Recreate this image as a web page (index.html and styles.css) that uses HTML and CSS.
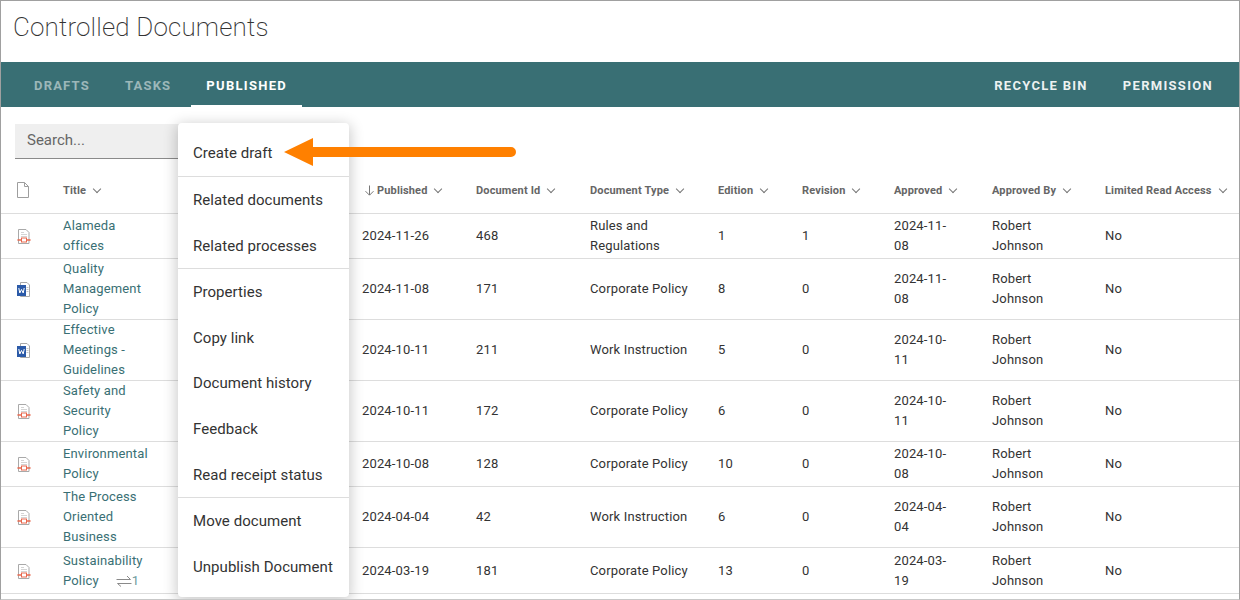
FILE: index.html
```html
<!DOCTYPE html>
<html lang="en">
<head>
  <meta charset="UTF-8">
  <title>Controlled Documents</title>
  <link rel="stylesheet" href="styles.css">
</head>
<body>
  <svg class="defs" width="0" height="0">
    <symbol id="pdf" viewBox="0 0 16 16">
      <path d="M2.500 1.500h7.500L13 4.500V15.500H2.500z" fill="#fff" stroke="#a9a9a9"/>
      <path d="M5 4.500h3M5 6.500h6M5 8.500h6" stroke="#d4d4d4"/>
      <rect x="5.500" y="10" width="5" height="4" fill="#fff" stroke="#e8684e"/>
      <path d="M2 12h3M11 12h3" stroke="#e8684e" stroke-width="1.600" stroke-linecap="round"/>
    </symbol>
    <symbol id="word" viewBox="0 0 16 16">
      <path d="M4.500 1.500h6.500L13.500 4V15.500H4.500z" fill="#fff" stroke="#a9a9a9"/>
      <path d="M10.500 6.500h2M10.500 8.500h2M10.500 10.500h2" stroke="#c6c6c6"/>
      <rect x="1" y="4" width="9" height="11" fill="#2b5aa8"/>
      <path d="M2.800 7l1 5 1.700-3.600L7.200 12l1-5" fill="none" stroke="#fff"/>
    </symbol>
  </svg>

  <div class="frame">
    <h1 class="page-title">Controlled Documents</h1>

    <nav class="tabbar">
      <div class="tabs">
        <a class="tab">Drafts</a>
        <a class="tab">Tasks</a>
        <a class="tab active">Published</a>
      </div>
      <div class="tabs">
        <a class="tab on">Recycle Bin</a>
        <a class="tab on">Permission</a>
      </div>
    </nav>

    <div class="search-row">
      <div class="search">Search...</div>
    </div>

    <table class="docs">
      <colgroup>
        <col class="c-icon"><col class="c-title"><col class="c-pub"><col class="c-id"><col class="c-type">
        <col class="c-ed"><col class="c-rev"><col class="c-appr"><col class="c-by"><col class="c-lim">
      </colgroup>
      <thead>
        <tr>
          <th class="icon-cell">
            <svg class="blank" width="14" height="16" viewBox="0 0 14 16"><path d="M1.500.5h7l4 4v11h-11z M8.500.5v4h4" fill="#fff" stroke="#9e9e9e"/></svg>
          </th>
          <th>Title <i class="chev"></i></th>
          <th><svg class="down" width="9" height="11" viewBox="0 0 9 11"><path d="M4.500.5v9.500M.5 6.200l4 4 4-4" fill="none" stroke="#777"/></svg>Published <i class="chev"></i></th>
          <th>Document Id <i class="chev"></i></th>
          <th>Document Type <i class="chev"></i></th>
          <th>Edition <i class="chev"></i></th>
          <th>Revision <i class="chev"></i></th>
          <th>Approved <i class="chev"></i></th>
          <th>Approved By <i class="chev"></i></th>
          <th>Limited Read Access <i class="chev"></i></th>
        </tr>
      </thead>
      <tbody>
        <tr>
          <td class="icon-cell"><svg class="ficon"><use href="#pdf"/></svg></td>
          <td><a class="doc-link">Alameda offices</a></td>
          <td>2024-11-26</td><td>468</td><td><div class="wrap-type">Rules and Regulations</div></td><td>1</td><td>1</td>
          <td><div class="wrap-date">2024-11-08</div></td><td><div class="wrap-name">Robert Johnson</div></td><td>No</td>
        </tr>
        <tr>
          <td class="icon-cell"><svg class="ficon"><use href="#word"/></svg></td>
          <td><a class="doc-link">Quality Management Policy</a></td>
          <td>2024-11-08</td><td>171</td><td>Corporate Policy</td><td>8</td><td>0</td>
          <td><div class="wrap-date">2024-11-08</div></td><td><div class="wrap-name">Robert Johnson</div></td><td>No</td>
        </tr>
        <tr>
          <td class="icon-cell"><svg class="ficon"><use href="#word"/></svg></td>
          <td><a class="doc-link">Effective Meetings - Guidelines</a></td>
          <td>2024-10-11</td><td>211</td><td>Work Instruction</td><td>5</td><td>0</td>
          <td><div class="wrap-date">2024-10-11</div></td><td><div class="wrap-name">Robert Johnson</div></td><td>No</td>
        </tr>
        <tr>
          <td class="icon-cell"><svg class="ficon"><use href="#pdf"/></svg></td>
          <td><a class="doc-link">Safety and Security Policy</a></td>
          <td>2024-10-11</td><td>172</td><td>Corporate Policy</td><td>6</td><td>0</td>
          <td><div class="wrap-date">2024-10-11</div></td><td><div class="wrap-name">Robert Johnson</div></td><td>No</td>
        </tr>
        <tr>
          <td class="icon-cell"><svg class="ficon"><use href="#pdf"/></svg></td>
          <td><a class="doc-link">Environmental Policy</a></td>
          <td>2024-10-08</td><td>128</td><td>Corporate Policy</td><td>10</td><td>0</td>
          <td><div class="wrap-date">2024-10-08</div></td><td><div class="wrap-name">Robert Johnson</div></td><td>No</td>
        </tr>
        <tr>
          <td class="icon-cell"><svg class="ficon"><use href="#pdf"/></svg></td>
          <td><a class="doc-link">The Process Oriented Business</a></td>
          <td>2024-04-04</td><td>42</td><td>Work Instruction</td><td>6</td><td>0</td>
          <td><div class="wrap-date">2024-04-04</div></td><td><div class="wrap-name">Robert Johnson</div></td><td>No</td>
        </tr>
        <tr class="tall">
          <td class="icon-cell"><svg class="ficon"><use href="#pdf"/></svg></td>
          <td><a class="doc-link"><span class="line">Sustainability</span><span class="line">Policy<span class="links"><svg width="16" height="12" viewBox="0 0 16 12"><path d="M.5 4.500h14L11 1M15.500 8.500H1.500L5 11.500" fill="none" stroke="#8a8a8a"/></svg>1</span></span></a></td>
          <td>2024-03-19</td><td>181</td><td>Corporate Policy</td><td>13</td><td>0</td>
          <td><div class="wrap-date">2024-03-19</div></td><td><div class="wrap-name">Robert Johnson</div></td><td>No</td>
        </tr>
      </tbody>
    </table>

    <ul class="menu">
      <li>Create draft</li>
      <li class="sep"></li>
      <li>Related documents</li>
      <li>Related processes</li>
      <li class="sep"></li>
      <li>Properties</li>
      <li>Copy link</li>
      <li>Document history</li>
      <li>Feedback</li>
      <li>Read receipt status</li>
      <li class="sep"></li>
      <li>Move document</li>
      <li>Unpublish Document</li>
    </ul>

    <svg class="arrow" width="235" height="30" viewBox="0 0 235 30">
      <path d="M1 15 30 1V10H228a5 5 0 0 1 0 10H30V29z" fill="#ff8000"/>
    </svg>
  </div>
</body>
</html>
```

FILE: styles.css
```css
html, body {
  margin: 0;
  height: 600px;
  overflow: hidden;
}

body {
  font-family: Roboto, "Liberation Sans", sans-serif;
  font-size: 13px;
  color: #333;
  background: #fff;
}

.defs {
  position: absolute;
}

.frame {
  position: relative;
  box-sizing: border-box;
  height: 600px;
  overflow: hidden;
  border: 1px solid #a0a0a0;
  border-bottom-color: #c8c8c8;
}

.page-title {
  margin: 0;
  height: 61px;
  padding: 9px 0 0 12px;
  box-sizing: border-box;
  font-size: 26px;
  line-height: 34px;
  font-weight: 200;
  letter-spacing: 0.150px;
  color: #333;
}

.tabbar {
  display: flex;
  justify-content: space-between;
  height: 45px;
  padding: 0 11px 0 18px;
  background: #396f74;
}

.tabs {
  display: flex;
  gap: 5px;
}

.tab {
  display: block;
  padding: 0 15px;
  line-height: 47px;
  font-size: 13px;
  font-weight: 700;
  letter-spacing: 1.200px;
  text-transform: uppercase;
  color: rgba(255, 255, 255, 0.5);
}

.tab.on {
  letter-spacing: 1.300px;
  color: rgba(255, 255, 255, 0.92);
}

.tab.active {
  color: #fff;
  height: 45px;
  box-sizing: border-box;
  letter-spacing: 1.300px;
  border-bottom: 2px solid #fff;
}

.search-row {
  padding: 17px 14px 0;
  height: 52px;
  box-sizing: border-box;
}

.search {
  width: 180px;
  height: 35px;
  box-sizing: border-box;
  padding-left: 12px;
  background: #efefef;
  border-bottom: 1px solid #8a8a8a;
  font-size: 15px;
  line-height: 32px;
  color: #666;
}

.docs {
  table-layout: fixed;
  width: 1238px;
  border-collapse: collapse;
  margin-top: 9px;
}

.c-icon { width: 54px; }
.c-title { width: 299px; }
.c-pub { width: 114px; }
.c-id { width: 114px; }
.c-type { width: 128px; }
.c-ed { width: 84px; }
.c-rev { width: 92px; }
.c-appr { width: 98px; }
.c-by { width: 113px; }
.c-lim { width: 142px; }

.docs th {
  height: 45px;
  padding: 0 8px;
  box-sizing: border-box;
  font-size: 11px;
  font-weight: 700;
  letter-spacing: 0.150px;
  text-align: left;
  white-space: nowrap;
  color: #666;
  border-bottom: 1px solid #ddd;
}

.docs td {
  height: 45px;
  box-sizing: border-box;
  padding: 0 8px;
  line-height: 20px;
  letter-spacing: 0.150px;
  border-bottom: 1px solid #ddd;
  vertical-align: middle;
}

.docs .tall td {
  height: 46px;
  padding-top: 1px;
}

.docs .icon-cell {
  padding: 0 0 0 15px;
}

.blank,
.ficon {
  display: block;
}

.ficon {
  width: 16px;
  height: 16px;
}

.chev {
  display: inline-block;
  width: 5px;
  height: 5px;
  margin: 0 0 2px 5px;
  border-right: 1px solid #777;
  border-bottom: 1px solid #777;
  transform: rotate(45deg);
}

.down {
  margin: 0 3px;
  vertical-align: -2px;
}

.doc-link {
  display: block;
  width: 86px;
  color: #396f74;
}

.line {
  display: block;
  height: 20px;
  white-space: nowrap;
}

.links {
  margin-left: 17px;
  color: #6f9a9e;
}

.links svg {
  vertical-align: -2px;
}

.wrap-type { width: 90px; }
.wrap-date { width: 66px; }
.wrap-name { width: 60px; }

.menu {
  position: absolute;
  left: 177px;
  top: 122px;
  box-sizing: border-box;
  width: 171px;
  height: 474px;
  margin: 0;
  padding: 7.400px 0 0;
  list-style: none;
  background: #fff;
  border-radius: 4px;
  box-shadow: 0 3px 14px 2px rgba(0, 0, 0, 0.2);
}

.menu li {
  height: 45.600px;
  padding-left: 15px;
  font-size: 15px;
  letter-spacing: 0.050px;
  line-height: 46px;
  color: #333;
}

.menu .sep {
  height: 1px;
  padding: 0;
  background: #ddd;
}

.arrow {
  position: absolute;
  left: 282px;
  top: 136px;
}
```
